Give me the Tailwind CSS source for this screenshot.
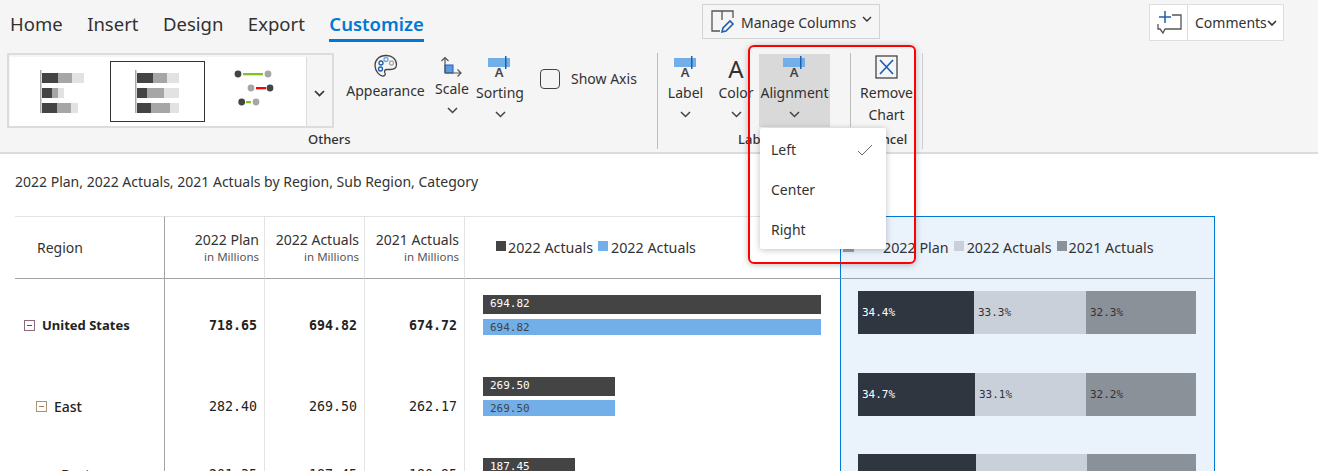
<!DOCTYPE html>
<html>
  <head>
    <meta charset="UTF-8" />
    <script src="https://cdn.jsdelivr.net/npm/@tailwindcss/browser@4"></script>
  </head>
  <body class="bg-white h-[471px] w-[1318px] overflow-hidden relative font-['Noto_Sans',sans-serif] text-[#323130]">
    <!-- ribbon -->
    <header class="h-[154px] bg-[#f5f5f5] border-b-2 border-[#dcdcdc] flex flex-col">
      <div class="h-[53px] flex items-start relative shrink-0">
        <nav class="flex gap-[24.5px] pl-[10px] pt-[11px] text-[18.5px] leading-[26px]">
          <span>Home</span>
          <span>Insert</span>
          <span>Design</span>
          <span>Export</span>
          <span class="font-semibold text-[#0078d4] border-b-[3px] border-[#0078d4] h-[31px]">Customize</span>
        </nav>
        <button class="absolute left-[702px] top-[4px] w-[178px] h-[35px] border border-[#d2d2d2] flex items-center pl-[8px] gap-[6px] text-[14px]">
          <svg width="24" height="24" viewBox="0 0 24 24" fill="none" class="shrink-0"><path d="M9 21H1V1h21v7M11 1v9" stroke="#555" stroke-width="1.3"/><path d="M11 22l1-4 7-7 3 3-7 7z" stroke="#1f5fb0" stroke-width="1.6"/></svg>
          <span class="pt-[1px]">Manage Columns</span>
          <svg width="10" height="6" viewBox="0 0 10 6" fill="none" class="-mt-[5px]"><path d="M1 1l4 4 4-4" stroke="#333" stroke-width="1.4"/></svg>
        </button>
        <div class="absolute left-[1149px] top-[4px] w-[135px] h-[37px] border border-[#dedede] bg-white flex items-center text-[14px]">
          <div class="w-[38px] h-full border-r border-[#dedede] flex items-center justify-center">
            <svg width="26" height="26" viewBox="0 0 26 26" fill="none"><path d="M16 5h9v14H9l-2 4-3-4H2v-5" stroke="#555" stroke-width="1.3"/><path d="M9 1v12M3 7h12" stroke="#1f5fb0" stroke-width="1.5"/></svg>
          </div>
          <span class="pl-[7px]">Comments</span>
          <svg width="10" height="6" viewBox="0 0 10 6" fill="none"><path d="M1 1l4 4 4-4" stroke="#333" stroke-width="1.6"/></svg>
        </div>
      </div>
      <div class="flex items-start text-[14px] leading-[20px] flex-1">
        <!-- Others group -->
        <div class="ml-[7px] w-[327px] h-[75px] border-2 border-[#dcdcdc] pt-[2px] pl-[1px] flex shrink-0">
          <div class="w-[297px] bg-white border-r border-[#dcdcdc] flex items-center">
            <div class="w-[100px] pl-[30px]">
              <svg width="46" height="43" viewBox="0 0 46 43"><rect x="0" y="0" width="1.500" height="43" fill="#aaa"/><rect x="2" y="3" width="16" height="10" fill="#444"/><rect x="18" y="3" width="14" height="10" fill="#a6a6a6"/><rect x="32" y="3" width="12" height="10" fill="#e2e2e2"/><rect x="2" y="18" width="10" height="10" fill="#444"/><rect x="12" y="18" width="6" height="10" fill="#a6a6a6"/><rect x="18" y="18" width="6" height="10" fill="#e2e2e2"/><rect x="2" y="33" width="15" height="10" fill="#444"/><rect x="17" y="33" width="14" height="10" fill="#a6a6a6"/><rect x="31" y="33" width="7" height="10" fill="#e2e2e2"/></svg>
            </div>
            <div class="w-[95px] h-[61px] border border-[#333] pl-[24px] flex items-center">
              <svg width="46" height="43" viewBox="0 0 46 43"><rect x="0" y="0" width="1.500" height="43" fill="#aaa"/><rect x="2" y="3" width="16" height="10" fill="#444"/><rect x="18" y="3" width="14" height="10" fill="#a6a6a6"/><rect x="32" y="3" width="12" height="10" fill="#e2e2e2"/><rect x="2" y="18" width="10" height="10" fill="#444"/><rect x="12" y="18" width="17" height="10" fill="#a6a6a6"/><rect x="29" y="18" width="15" height="10" fill="#e2e2e2"/><rect x="2" y="33" width="14" height="10" fill="#444"/><rect x="16" y="33" width="19" height="10" fill="#a6a6a6"/><rect x="35" y="33" width="9" height="10" fill="#e2e2e2"/></svg>
            </div>
            <div class="flex-1 pl-[28px]">
              <svg width="46" height="43" viewBox="0 0 46 43"><rect x="10" y="3" width="20" height="2.300" fill="#7fc31c"/><circle cx="5" cy="4" r="3.400" fill="#444"/><circle cx="35" cy="4" r="3.400" fill="#a6a6a6"/><rect x="23" y="17" width="10" height="2.300" fill="#f00"/><circle cx="18" cy="18" r="3.400" fill="#a6a6a6"/><circle cx="37" cy="18" r="3.400" fill="#444"/><rect x="13" y="31" width="5" height="2.300" fill="#7fc31c"/><circle cx="8.700" cy="32" r="3.400" fill="#444"/><circle cx="23" cy="32" r="3.400" fill="#a6a6a6"/></svg>
            </div>
          </div>
          <div class="flex-1 flex items-center justify-center pt-[3px]">
            <svg width="11" height="7" viewBox="0 0 11 7" fill="none"><path d="M1 1l4.500 4.500L10 1" stroke="#333" stroke-width="1.700"/></svg>
          </div>
        </div>
        <!-- Appearance -->
        <div class="w-[79px] ml-[12px] flex flex-col items-center shrink-0 mt-[1px]">
          <svg width="24" height="24" viewBox="0 0 24 24" fill="none"><path d="M12 1.500C5 1.500 1 6 1 11.500c0 6 5 11 8.500 10.500 2-.3 2-2 1.300-3.500-.6-1.500 0-3 2-3h3.500c3 0 6.200-1 6.200-5 0-5.500-4.500-9-10-9z" stroke="#444" stroke-width="1.300"/><circle cx="7" cy="9" r="2" stroke="#1f5fb0" stroke-width="1.300"/><circle cx="12" cy="5.500" r="2" stroke="#6fa8e0" stroke-width="1.300"/><circle cx="17.500" cy="9" r="2" stroke="#aaa" stroke-width="1.300"/><circle cx="6.500" cy="15" r="2" stroke="#1f5fb0" stroke-width="1.300"/></svg>
          <span class="mt-[3px]">Appearance</span>
        </div>
        <!-- Scale -->
        <div class="w-[48px] ml-[3px] flex flex-col items-center shrink-0 mt-[3px]">
          <svg width="24" height="24" viewBox="0 0 24 24" fill="none"><rect x="5" y="9" width="8" height="8" fill="#5d9be0" stroke="#1f5fb0" stroke-width="1"/><path d="M5 17V1.500M1.500 5L5 1.500 8.500 5M5 17h16M17.500 13.500L21 17l-3.500 3.500" stroke="#555" stroke-width="1.200"/></svg>
          <span class="-mt-[1px]">Scale</span>
          <svg width="11" height="7" viewBox="0 0 11 7" fill="none" class="mt-[8px]"><path d="M1 1l4.500 4.500L10 1" stroke="#444" stroke-width="1.500"/></svg>
        </div>
        <!-- Sorting -->
        <div class="w-[48px] flex flex-col items-center shrink-0 mt-[2px]">
          <svg width="24" height="30" viewBox="0 0 24 30"><rect x="0" y="3" width="22" height="9" fill="#72afe8"/><rect x="17" y="1" width="1.500" height="13" fill="#1f5fb0"/><text x="11" y="22" font-size="13" font-weight="600" fill="#444" font-family="Noto Sans, sans-serif" text-anchor="middle">A</text></svg>
          <span class="-mt-[2px]">Sorting</span>
          <svg width="11" height="7" viewBox="0 0 11 7" fill="none" class="mt-[8px]"><path d="M1 1l4.500 4.500L10 1" stroke="#444" stroke-width="1.500"/></svg>
        </div>
        <!-- Show Axis -->
        <div class="flex items-center ml-[16px] mt-[15px] shrink-0 w-[117px] relative">
          <span class="w-[20px] h-[20px] border border-[#444] rounded-[4px] shrink-0"></span>
          <span class="ml-[11px] pt-[1px]">Show Axis</span>
        </div>
        <div class="w-px h-[96px] bg-[#bdbdbd] shrink-0"></div>
        <!-- Label -->
        <div class="w-[55px] flex flex-col items-center shrink-0 mt-[2px]">
          <svg width="24" height="30" viewBox="0 0 24 30"><rect x="0" y="3" width="22" height="9" fill="#72afe8"/><rect x="17" y="1" width="1.500" height="13" fill="#1f5fb0"/><text x="11" y="22" font-size="13" font-weight="600" fill="#444" font-family="Noto Sans, sans-serif" text-anchor="middle">A</text></svg>
          <span class="-mt-[2px]">Label</span>
          <svg width="11" height="7" viewBox="0 0 11 7" fill="none" class="mt-[8px]"><path d="M1 1l4.500 4.500L10 1" stroke="#444" stroke-width="1.500"/></svg>
        </div>
        <!-- Color -->
        <div class="w-[46px] flex flex-col items-center shrink-0 mt-[2px]">
          <span class="text-[24px] leading-[28px] h-[28px]">A</span>
          <span>Color</span>
          <svg width="11" height="7" viewBox="0 0 11 7" fill="none" class="mt-[8px]"><path d="M1 1l4.500 4.500L10 1" stroke="#444" stroke-width="1.500"/></svg>
        </div>
        <!-- Alignment -->
        <div class="w-[71px] h-[73px] bg-[#d9d9d9] flex flex-col items-center shrink-0 mt-[1px] pt-[1px]">
          <svg width="24" height="30" viewBox="0 0 24 30"><rect x="0" y="3" width="22" height="9" fill="#72afe8"/><rect x="17" y="1" width="1.500" height="13" fill="#1f5fb0"/><text x="11" y="22" font-size="13" font-weight="600" fill="#444" font-family="Noto Sans, sans-serif" text-anchor="middle">A</text></svg>
          <span class="-mt-[2px] whitespace-nowrap">Alignment</span>
          <svg width="11" height="7" viewBox="0 0 11 7" fill="none" class="mt-[8px]"><path d="M1 1l4.500 4.500L10 1" stroke="#444" stroke-width="1.500"/></svg>
        </div>
        <div class="w-px h-[74px] bg-[#bdbdbd] shrink-0 ml-[20px]"></div>
        <!-- Remove Chart -->
        <div class="w-[71px] flex flex-col items-center shrink-0 mt-[2px] leading-[22px]">
          <svg width="24" height="24" viewBox="0 0 24 24" fill="none"><rect x="1" y="1" width="21" height="22" stroke="#444" stroke-width="1.300"/><path d="M5 5l13 14M18 5L5 19" stroke="#1f5fb0" stroke-width="1.700"/></svg>
          <span class="mt-[3px]">Remove</span>
          <span>Chart</span>
        </div>
        <div class="w-px h-[96px] bg-[#cfcfcf] shrink-0"></div>
      </div>
      <div class="absolute top-[130px] left-[308px] text-[13px] leading-[18px] font-medium">Others</div>
      <div class="absolute top-[130px] left-[738px] text-[13px] leading-[18px] font-medium">Label</div>
      <div class="absolute top-[130px] left-[866px] text-[13px] leading-[18px] font-medium">Cancel</div>
    </header>

    <!-- report -->
    <main class="pl-[15px]">
      <h1 class="h-[62px] pt-[18px] text-[14px] leading-[20px] text-[#333]">2022 Plan, 2022 Actuals, 2021 Actuals by Region, Sub Region, Category</h1>
      <div class="grid grid-cols-[150px_100px_100px_100px_375px_375px] w-[1200px] text-[#333]">
        <!-- header -->
        <div class="h-[63px] border-t border-b border-t-[#e3e3e3] border-b-[#a3a3a3] border-r border-r-[#a3a3a3] flex items-center pl-[22px] text-[14px]">Region</div>
        <div class="h-[63px] border-t border-b border-t-[#e3e3e3] border-b-[#a3a3a3] border-r border-r-[#e3e3e3] flex flex-col justify-center items-end pr-[5px]">
          <span class="text-[14px] leading-[18px]">2022 Plan</span><span class="text-[11.5px] leading-[15px] text-[#555]">in Millions</span>
        </div>
        <div class="h-[63px] border-t border-b border-t-[#e3e3e3] border-b-[#a3a3a3] border-r border-r-[#e3e3e3] flex flex-col justify-center items-end pr-[5px]">
          <span class="text-[14px] leading-[18px]">2022 Actuals</span><span class="text-[11.5px] leading-[15px] text-[#555]">in Millions</span>
        </div>
        <div class="h-[63px] border-t border-b border-t-[#e3e3e3] border-b-[#a3a3a3] border-r border-r-[#e3e3e3] flex flex-col justify-center items-end pr-[5px]">
          <span class="text-[14px] leading-[18px]">2021 Actuals</span><span class="text-[11.5px] leading-[15px] text-[#555]">in Millions</span>
        </div>
        <div class="h-[63px] border-t border-b border-t-[#e3e3e3] border-b-[#a3a3a3] flex items-center pl-[31px] text-[14.3px]">
          <span class="w-[10px] h-[10px] bg-[#444] -mt-[3px] mr-[2px]"></span><span>2022 Actuals</span>
          <span class="w-[10px] h-[10px] bg-[#72afe8] -mt-[3px] ml-[5px] mr-[3px]"></span><span>2022 Actuals</span>
        </div>
        <div class="h-[63px] border-t border-x border-b border-t-[#0078d4] border-x-[#0078d4] border-b-[#9aa3ad] bg-[#eaf2fc] flex items-center pl-[2px] text-[14.3px]">
          <span class="w-[11px] h-[11px] bg-[#9aa0a8] -mt-[3px] mr-[29px]"></span><span>2022 Plan</span>
          <span class="w-[10px] h-[10px] bg-[#c9d0da] -mt-[3px] ml-[5px] mr-[3px]"></span><span>2022 Actuals</span>
          <span class="w-[10px] h-[10px] bg-[#8b9199] -mt-[3px] ml-[5px] mr-[2px]"></span><span>2021 Actuals</span>
        </div>

        <!-- United States -->
        <div class="h-[81px] border-r border-r-[#a3a3a3] flex items-center pl-[9px] pt-[12px] text-[13px] font-bold text-[#222]">
          <span class="w-[11px] h-[11px] border border-[#8a6a7a] flex items-center justify-center mr-[7px]"><span class="w-[5px] h-px bg-[#a0304a]"></span></span>United States
        </div>
        <div class="h-[81px] border-r border-r-[#e3e3e3] flex items-center justify-end pr-[7px] pt-[12px] font-['DejaVu_Sans_Mono',monospace] font-bold text-[13.3px] text-[#222]">718.65</div>
        <div class="h-[81px] border-r border-r-[#e3e3e3] flex items-center justify-end pr-[7px] pt-[12px] font-['DejaVu_Sans_Mono',monospace] font-bold text-[13.3px] text-[#222]">694.82</div>
        <div class="h-[81px] border-r border-r-[#e3e3e3] flex items-center justify-end pr-[7px] pt-[12px] font-['DejaVu_Sans_Mono',monospace] font-bold text-[13.3px] text-[#222]">674.72</div>
        <div class="h-[81px] pl-[18px] pt-[16px] flex flex-col gap-[5px] font-['DejaVu_Sans_Mono',monospace] text-[11px]">
          <div class="w-[338px] h-[19px] bg-[#444] text-white pl-[7px] leading-[18px]">694.82</div>
          <div class="w-[338px] h-[16px] bg-[#72afe8] text-[#444] pl-[7px] leading-[17px]">694.82</div>
        </div>
        <div class="h-[81px] border-x border-x-[#0078d4] bg-[#eaf2fc] pl-[17px] pt-[12px] font-['DejaVu_Sans_Mono',monospace] text-[11px]">
          <div class="flex w-[338px] h-[43px] items-center leading-[43px]">
            <div class="w-[116px] bg-[#2f3640] text-white pl-[4px]">34.4%</div>
            <div class="w-[112px] bg-[#c9d0da] pl-[4px]">33.3%</div>
            <div class="w-[110px] bg-[#8b9199] pl-[4px]">32.3%</div>
          </div>
        </div>

        <!-- East -->
        <div class="h-[81px] border-r border-r-[#a3a3a3] flex items-center pl-[21px] pt-[12px] text-[14px] font-medium text-[#222]">
          <span class="w-[11px] h-[11px] border border-[#a8917a] flex items-center justify-center mr-[7px]"><span class="w-[5px] h-px bg-[#b8763a]"></span></span>East
        </div>
        <div class="h-[81px] border-r border-r-[#e3e3e3] flex items-center justify-end pr-[7px] pt-[12px] font-['DejaVu_Sans_Mono',monospace] text-[13.3px] text-[#222]">282.40</div>
        <div class="h-[81px] border-r border-r-[#e3e3e3] flex items-center justify-end pr-[7px] pt-[12px] font-['DejaVu_Sans_Mono',monospace] text-[13.3px] text-[#222]">269.50</div>
        <div class="h-[81px] border-r border-r-[#e3e3e3] flex items-center justify-end pr-[7px] pt-[12px] font-['DejaVu_Sans_Mono',monospace] text-[13.3px] text-[#222]">262.17</div>
        <div class="h-[81px] pl-[18px] pt-[17px] flex flex-col gap-[4px] font-['DejaVu_Sans_Mono',monospace] text-[11px]">
          <div class="w-[132px] h-[19px] bg-[#444] text-white pl-[7px] leading-[18px]">269.50</div>
          <div class="w-[132px] h-[16px] bg-[#72afe8] text-[#444] pl-[7px] leading-[17px]">269.50</div>
        </div>
        <div class="h-[81px] border-x border-x-[#0078d4] bg-[#eaf2fc] pl-[17px] pt-[13px] font-['DejaVu_Sans_Mono',monospace] text-[11px]">
          <div class="flex w-[338px] h-[43px] items-center leading-[43px]">
            <div class="w-[117px] bg-[#2f3640] text-white pl-[4px]">34.7%</div>
            <div class="w-[111px] bg-[#c9d0da] pl-[4px]">33.1%</div>
            <div class="w-[110px] bg-[#8b9199] pl-[4px]">32.2%</div>
          </div>
        </div>

        <!-- third row, cut off by the window -->
        <div class="h-[30px] overflow-hidden border-r border-r-[#a3a3a3] pl-[46px] pt-[24px] text-[14px] leading-[20px] text-[#222]">Boston</div>
        <div class="h-[30px] overflow-hidden border-r border-r-[#e3e3e3] text-right pr-[7px] pt-[24px] leading-[20px] font-['DejaVu_Sans_Mono',monospace] text-[13.3px] text-[#222]">201.35</div>
        <div class="h-[30px] overflow-hidden border-r border-r-[#e3e3e3] text-right pr-[7px] pt-[24px] leading-[20px] font-['DejaVu_Sans_Mono',monospace] text-[13.3px] text-[#222]">187.45</div>
        <div class="h-[30px] overflow-hidden border-r border-r-[#e3e3e3] text-right pr-[7px] pt-[24px] leading-[20px] font-['DejaVu_Sans_Mono',monospace] text-[13.3px] text-[#222]">180.95</div>
        <div class="h-[30px] overflow-hidden pl-[18px] pt-[17px] font-['DejaVu_Sans_Mono',monospace] text-[11px]">
          <div class="w-[92px] h-[19px] bg-[#444] text-white pl-[7px] leading-[18px]">187.45</div>
        </div>
        <div class="h-[30px] overflow-hidden border-x border-x-[#0078d4] bg-[#eaf2fc] pl-[17px] pt-[13px]">
          <div class="flex w-[338px] h-[43px]">
            <div class="w-[118px] bg-[#2f3640]"></div>
            <div class="w-[111px] bg-[#c9d0da]"></div>
            <div class="w-[109px] bg-[#8b9199]"></div>
          </div>
        </div>
      </div>
    </main>

    <!-- alignment dropdown -->
    <div class="absolute left-[760px] top-[128px] w-[126px] h-[121px] bg-white rounded-[2px] shadow-[0_1px_6px_rgba(0,0,0,0.25)] text-[14px] text-[#333] flex flex-col pt-[2px]">
      <div class="h-[40px] pl-[11px] flex items-center justify-between pr-[13px]">Left
        <svg width="16" height="12" viewBox="0 0 16 12" fill="none"><path d="M1 7l4 4L15 1" stroke="#666" stroke-width="1"/></svg>
      </div>
      <div class="h-[40px] pl-[11px] flex items-center">Center</div>
      <div class="h-[40px] pl-[11px] flex items-center">Right</div>
    </div>

    <!-- red annotation -->
    <div class="absolute left-[748px] top-[45px] w-[168px] h-[219px] border-2 border-[#f00] rounded-[6px] shadow-[0_1px_6px_rgba(0,0,0,0.25)] pointer-events-none"></div>
  </body>
</html>
